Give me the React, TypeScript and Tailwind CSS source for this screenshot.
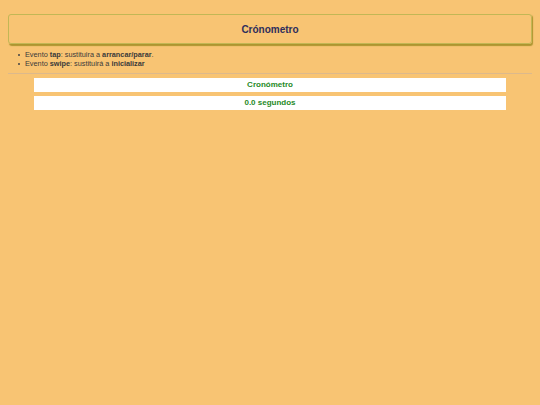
export default function App() {
  return (
    <div className="min-h-[405px] w-full bg-[#f8c473] font-['Liberation_Sans',Arial,sans-serif] pt-[14px]">
      {/* Header */}
      <div className="mx-[8px] h-[30px] rounded-[3px] border border-[#c2b755] shadow-[1px_1.5px_1px_rgba(140,130,20,0.7)] flex items-center justify-center">
        <h1 className="text-[10px] font-bold text-[#2e2e5c]">Crónometro</h1>
      </div>

      {/* Notes */}
      <ul className="mt-[6px] pl-[18px] text-[7.3px] leading-[9px] text-[#3a3a3a]">
        <li className="flex items-center">
          <span className="w-[2px] h-[2px] bg-[#444] rounded-full mr-[5px]" />
          <span>
            Evento <b>tap</b>: sustituira a <b>arrancar/parar</b>.
          </span>
        </li>
        <li className="flex items-center">
          <span className="w-[2px] h-[2px] bg-[#444] rounded-full mr-[5px]" />
          <span>
            Evento <b>swipe</b>: sustituirá a <b>inicializar</b>
          </span>
        </li>
      </ul>

      <hr className="mx-[8px] mt-[5px] border-0 border-t border-[#dcb98c]" />

      {/* Stopwatch */}
      <div className="mx-[34px] mt-[4px] flex flex-col gap-[4px]">
        <div className="h-[14px] bg-white flex items-center justify-center text-[8px] font-bold text-[#1f8a1f]">
          Cronómetro
        </div>
        <div className="h-[14px] bg-white flex items-center justify-center text-[8px] font-bold text-[#1f8a1f]">
          0.0 segundos
        </div>
      </div>
    </div>
  );
}
